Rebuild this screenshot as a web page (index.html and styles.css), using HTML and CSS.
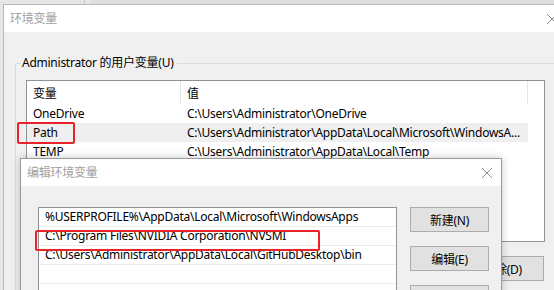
FILE: index.html
```html
<!DOCTYPE html>
<html lang="zh-CN">
<head>
<meta charset="utf-8">
<title>环境变量</title>
<link rel="stylesheet" href="styles.css">
</head>
<body>
<div class="desk">
  <div class="backstrip"><span class="bs-a"></span><span class="bs-b"></span></div>

  <section class="win win-env">
    <header class="titlebar">
      <span class="title">环境变量</span>
      <svg class="close close-env" width="12" height="12" viewBox="0 0 12 12"><path d="M1 1L11 11M11 1L1 11" stroke="#8a8a8a" stroke-width="1" fill="none"/></svg>
    </header>
    <div class="winbody">
      <fieldset class="group">
        <legend>Administrator 的用户变量(U)</legend>
        <div class="listview">
          <div class="lv-head">
            <div class="c1">变量</div>
            <div class="c2">值</div>
          </div>
          <div class="lv-row">
            <div class="c1">OneDrive</div>
            <div class="c2">C:\Users\Administrator\OneDrive</div>
          </div>
          <div class="lv-row sel">
            <div class="c1">Path</div>
            <div class="c2">C:\Users\Administrator\AppData\Local\Microsoft\WindowsA...</div>
          </div>
          <div class="lv-row">
            <div class="c1">TEMP</div>
            <div class="c2">C:\Users\Administrator\AppData\Local\Temp</div>
          </div>
        </div>
        <div class="btnrow">
          <button class="btn wide">新建(N)...</button>
          <button class="btn wide">编辑(E)...</button>
          <button class="btn wide">删除(D)</button>
        </div>
      </fieldset>
    </div>
  </section>

  <section class="win win-edit">
    <header class="titlebar">
      <span class="title">编辑环境变量</span>
      <svg class="close" width="12" height="12" viewBox="0 0 12 12"><path d="M1 1L11 11M11 1L1 11" stroke="#8a8a8a" stroke-width="1" fill="none"/></svg>
    </header>
    <div class="winbody edit-body">
      <div class="pathlist">
        <div class="pl-row">%USERPROFILE%\AppData\Local\Microsoft\WindowsApps</div>
        <div class="pl-row">C:\Program Files\NVIDIA Corporation\NVSMI</div>
        <div class="pl-row">C:\Users\Administrator\AppData\Local\GitHubDesktop\bin</div>
        <div class="pl-row"></div>
        <div class="pl-row"></div>
      </div>
      <div class="btncol">
        <button class="btn">新建(N)</button>
        <button class="btn">编辑(E)</button>
        <button class="btn">浏览(B)...</button>
      </div>
    </div>
  </section>

  <div class="mark mark-path"></div>
  <div class="mark mark-nvsmi"></div>
</div>
</body>
</html>
```

FILE: styles.css
```css
* { box-sizing: border-box; }
html, body { margin: 0; padding: 0; }
body {
  width: 554px;
  height: 290px;
  overflow: hidden;
  background: #e4e4e4;
  font-family: "Noto Sans", "Noto Sans CJK SC", sans-serif;
  font-size: 12px;
  letter-spacing: -0.25px;
  color: #000;
}
.desk {
  position: relative;
  width: 554px;
  height: 290px;
  overflow: hidden;
  background: #e6e6e6;
}
.backstrip {
  height: 4px;
  display: flex;
}
.bs-a { width: 85px; border-right: 1px solid #c8c8c8; }
.bs-b { flex: 1; margin-left: 6px; background: #dedede; }

.win {
  position: absolute;
  background: #f0f0f0;
  border: 1px solid #b9b9b9;
}
.win-env {
  left: 3px;
  top: 4px;
  width: 580px;
  height: 320px;
}
.win-edit {
  left: 20px;
  top: 158px;
  width: 482px;
  height: 200px;
  border-color: #9a9a9a;
  box-shadow: 0 0 8px rgba(0, 0, 0, 0.22);
}
.titlebar {
  height: 27px;
  background: #fff;
  display: flex;
  align-items: center;
  padding-left: 6px;
  padding-right: 8px;
}
.title {
  flex: 1;
  color: #a0a0a0;
  line-height: 16px;
}
.close-env { margin-right: 16px; }

.winbody { padding: 0; }

/* group box */
.group {
  margin: 23px 0 0 11px;
  padding: 9px 10px 0 10px;
  border: 1px solid #dcdcdc;
  width: 560px;
  height: 260px;
  min-width: 0;
}
.group legend {
  padding: 0 3px 0 1px;
  margin-left: -5px;
  line-height: 16px;
}

/* list view */
.listview {
  width: 519px;
  height: 162px;
  background: #fff;
  border: 1px solid #8f9399;
}
.lv-head, .lv-row { display: flex; }
.lv-head { height: 23px; }
.lv-head .c1, .lv-head .c2 {
  border-right: 1px solid #e5e5e5;
  display: flex;
  align-items: center;
}
.c1 { width: 154px; padding-left: 6px; white-space: nowrap; }
.c2 { width: 347px; padding-left: 6px; white-space: nowrap; overflow: hidden; }
.lv-row { height: 19px; align-items: center; }
.lv-row .c1, .lv-row .c2 { line-height: 19px; }
.lv-row.sel { background: #efefef; width: 501px; }

.btnrow {
  display: flex;
  justify-content: flex-end;
  gap: 8px;
  margin-top: 14px;
  width: 518px;
}
.btn {
  font: inherit;
  letter-spacing: inherit;
  color: #000;
  background: #e1e1e1;
  border: 1px solid #adadad;
  height: 25px;
  padding: 0;
}
.btn.wide { width: 83px; }

/* edit dialog body */
.edit-body {
  display: flex;
  align-items: flex-start;
  gap: 13px;
  padding: 21px 0 0 17px;
}
.pathlist {
  width: 359px;
  height: 120px;
  background: #fff;
  border: 1px solid #8f9399;
}
.pl-row {
  height: 19px;
  line-height: 18px;
  padding-left: 6px;
  border-bottom: 1px solid #ececec;
  white-space: nowrap;
  overflow: hidden;
}
.btncol {
  display: flex;
  flex-direction: column;
  gap: 14px;
}
.btncol .btn { width: 79px; }

/* red annotation boxes */
.mark {
  position: absolute;
  border: 2px solid #e8232a;
  border-radius: 2px;
}
.mark-path { left: 17px; top: 122px; width: 58px; height: 22px; }
.mark-nvsmi { left: 35px; top: 230px; width: 285px; height: 21px; }
```
